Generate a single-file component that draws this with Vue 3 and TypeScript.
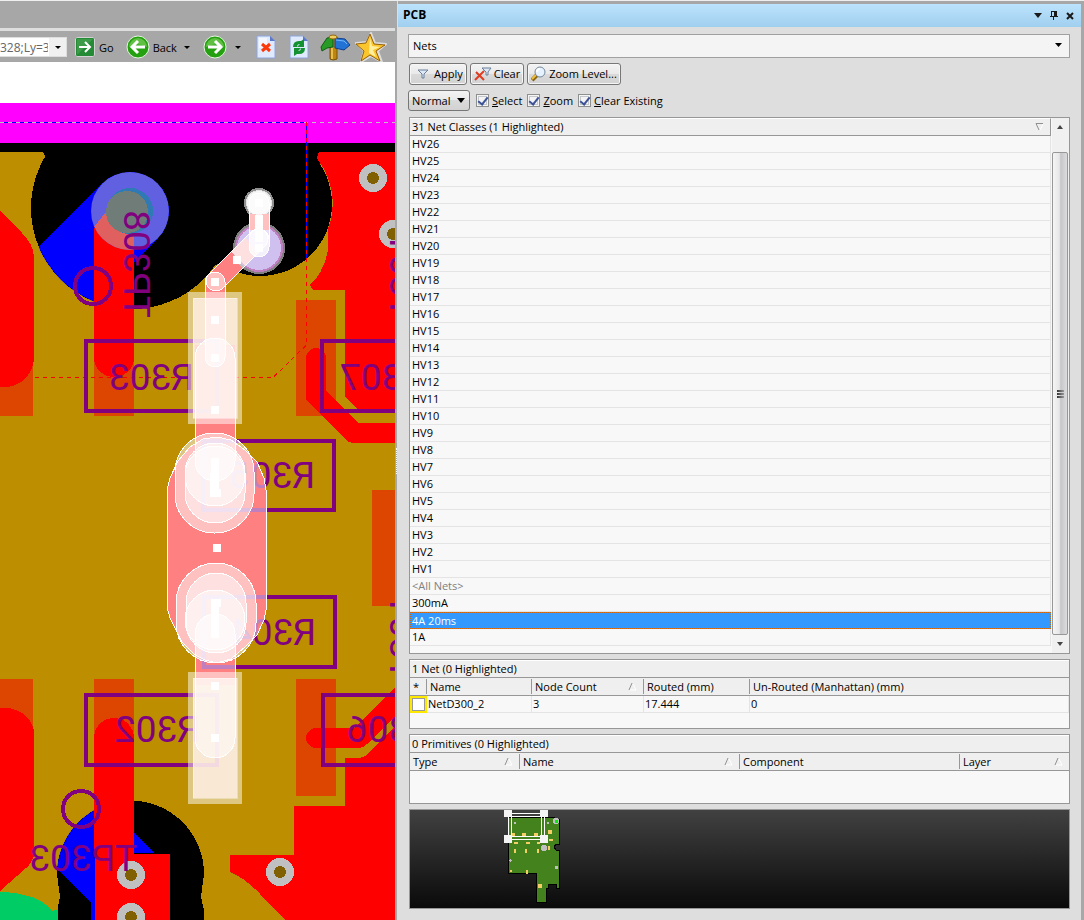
<script setup lang="ts">
import { computed, ref } from 'vue'

interface Via { x: number; y: number }
interface Box { x: number; y: number; w: number; h: number }
interface Column { label: string; sort: boolean; cls: string }

const hvClasses: string[] = Array.from({ length: 26 }, (_, i) => `HV${26 - i}`)
const netClasses = computed<string[]>(() => [...hvClasses, '<All Nets>', '300mA', '4A 20ms', '1A'])
const selected = ref('4A 20ms')

const address = ref('328;Ly=3950')
const objectKind = ref('Nets')
const maskMode = ref('Normal')
const optSelect = ref(true)
const optZoom = ref(true)
const optClear = ref(true)

const netColumns: Column[] = [
  { label: '*', sort: false, cls: 'c-mark' },
  { label: 'Name', sort: false, cls: 'c-name' },
  { label: 'Node Count', sort: true, cls: 'c-count' },
  { label: 'Routed (mm)', sort: false, cls: 'c-routed' },
  { label: 'Un-Routed (Manhattan) (mm)', sort: false, cls: 'c-rest' },
]
const primColumns: Column[] = [
  { label: 'Type', sort: true, cls: 'c-type' },
  { label: 'Name', sort: true, cls: 'c-wide' },
  { label: 'Component', sort: false, cls: 'c-wide' },
  { label: 'Layer', sort: true, cls: 'c-rest' },
]

const vias: Via[] = [
  { x: 373, y: 178 }, { x: 393, y: 234 }, { x: 280, y: 872 }, { x: 131, y: 875 }, { x: 131, y: 917 },
]
const pads: Box[] = [
  { x: 0, y: 300, w: 33, h: 116 }, { x: 94, y: 300, w: 40, h: 116 }, { x: 296, y: 300, w: 40, h: 116 },
  { x: 372, y: 490, w: 23, h: 116 }, { x: 0, y: 679, w: 33, h: 60 }, { x: 94, y: 679, w: 40, h: 60 },
  { x: 296, y: 679, w: 40, h: 117 },
]
const outlines: Box[] = [
  { x: 86, y: 341, w: 131, h: 70 }, { x: 322, y: 341, w: 131, h: 70 }, { x: 203, y: 441, w: 131, h: 69 },
  { x: 204, y: 597, w: 131, h: 70 }, { x: 86, y: 695, w: 131, h: 70 }, { x: 323, y: 695, w: 131, h: 70 },
]
const handles: Via[] = [
  { x: 259, y: 203 }, { x: 259, y: 238 }, { x: 259, y: 248 }, { x: 237, y: 260 }, { x: 215, y: 282 },
  { x: 215, y: 320 }, { x: 215, y: 358 }, { x: 215, y: 410 }, { x: 217, y: 548 }, { x: 215, y: 686 }, { x: 215, y: 738 },
]
const labels = [
  { t: 'R303', x: 194, y: 390 }, { t: 'R307', x: 425, y: 390 }, { t: 'R305', x: 315, y: 488 },
  { t: 'R304', x: 316, y: 645 }, { t: 'R302', x: 200, y: 742 }, { t: 'R306', x: 432, y: 742 },
  { t: 'TP303', x: 137, y: 871 },
]
const miniPads: Box[] = [
  { x: 32, y: 33, w: 3, h: 4 }, { x: 42, y: 33, w: 4, h: 4 }, { x: 54, y: 33, w: 4, h: 4 }, { x: 68, y: 30, w: 4, h: 4 },
  { x: 34, y: 42, w: 4, h: 2 }, { x: 46, y: 42, w: 4, h: 2 }, { x: 57, y: 42, w: 3, h: 2 }, { x: 69, y: 39, w: 4, h: 2 },
  { x: 34, y: 49, w: 2, h: 4 }, { x: 45, y: 49, w: 2, h: 4 }, { x: 57, y: 49, w: 2, h: 4 }, { x: 68, y: 46, w: 2, h: 4 },
  { x: 30, y: 70, w: 2, h: 2 }, { x: 46, y: 70, w: 2, h: 4 }, { x: 58, y: 84, w: 4, h: 4 },
]
const joint = 'M167 490L170 478 178 461 190 447 203 439 217 437 231 440 245 450 257 462 264 478 266 490V610L264 620 257 635 245 647 231 659 217 663 205 660 195 655 182 642 170 618 167 607z'
</script>

<template>
  <div class="app">
    <section class="editor">
      <div class="tabstrip"></div>
      <div class="toolbar">
        <div class="address">
          <input v-model="address" type="text" aria-label="Document address" />
          <button type="button" aria-label="Address history"><i class="caret"></i></button>
        </div>
        <button type="button" class="tool go">
          <svg width="20" height="20" viewBox="0 0 20 20">
            <rect x=".5" y=".5" width="19" height="19" rx="2" fill="#fff" />
            <rect x="1" y="1" width="18" height="18" rx="1" fill="#258a35" />
            <path d="M2 18V2h16z" fill="#4ba756" opacity=".6" />
            <path d="M4 10h10M10 5l5 5-5 5" fill="none" stroke="#fff" stroke-width="2" />
          </svg>
          <span>Go</span>
        </button>
        <button type="button" class="tool back">
          <svg width="24" height="24" viewBox="0 0 24 24">
            <circle cx="12" cy="12" r="11" fill="#24a010" stroke="#e4f5df" />
            <path d="M3 12a9 9 0 0 1 18 0q-9-5-18 0z" fill="#7fd161" opacity=".65" />
            <path d="M19 12H7M12 6l-6 6 6 6" fill="none" stroke="#fff" stroke-width="3" />
          </svg>
          <span>Back</span><i class="caret"></i>
        </button>
        <button type="button" class="tool forward" aria-label="Forward">
          <svg width="24" height="24" viewBox="0 0 24 24">
            <circle cx="12" cy="12" r="11" fill="#24a010" stroke="#e4f5df" />
            <path d="M3 12a9 9 0 0 1 18 0q-9-5-18 0z" fill="#7fd161" opacity=".65" />
            <path d="M5 12h12M12 6l6 6-6 6" fill="none" stroke="#fff" stroke-width="3" />
          </svg>
          <i class="caret"></i>
        </button>
        <button type="button" class="tool" aria-label="Stop">
          <svg width="20" height="24" viewBox="0 0 20 24">
            <path d="M1 1h13l5 5v17H1z" fill="#dfeafd" stroke="#8ea4dc" />
            <path d="M3 3h8v10H3z" fill="#fff" opacity=".6" />
            <path d="M14 1v5h5z" fill="#5c78c8" />
            <path d="M6 9l8 7M14 9l-8 7" stroke="#fa3a0a" stroke-width="3" />
          </svg>
        </button>
        <button type="button" class="tool refresh" aria-label="Refresh">
          <svg width="20" height="24" viewBox="0 0 20 24">
            <path d="M1 1h13l5 5v17H1z" fill="#dfeafd" stroke="#8ea4dc" />
            <path d="M14 1v5h5z" fill="#5c78c8" />
            <path d="M4 12q0-6 6-6h2l3-2v8H8l3-3q-3 0-3 3z" fill="#149232" />
            <path d="M16 13q0 6-6 6H8l-3 2v-8h7l-3 3q3 0 3-3z" fill="#149232" />
          </svg>
        </button>
        <button type="button" class="tool sign" aria-label="Home">
          <svg width="31" height="27" viewBox="0 0 31 27">
            <path d="M10 3h7v22q-4 2-7 0z" fill="#bd8512" stroke="#7c5205" />
            <path d="M12 3v22" stroke="#e9bf4b" stroke-width="2" />
            <path d="M1 13L7 4l6-1v10l-6 1-5 3z" fill="#279b25" stroke="#135d14" />
            <path d="M15 4l10 1 5 6-6 5-9-2z" fill="#2373d6" stroke="#123f8c" />
            <path d="M16 6l8 1 3 3" fill="none" stroke="#70b6ff" />
            <ellipse cx="13" cy="3" rx="4" ry="2" fill="#f0ce62" stroke="#946812" />
          </svg>
        </button>
        <button type="button" class="tool" aria-label="Favorites">
          <svg width="32" height="30" viewBox="0 0 32 30">
            <path d="M16 1l4 10 11 1-8 7 4 11-11-6-10 6 3-11-8-8 11-1z" fill="#dcdcdc" stroke="#dcdcdc" stroke-width="2" stroke-linejoin="round" />
            <path d="M15 2l4 10 11 1-9 6 4 10-10-6-9 6 3-10-8-7 10-1z" fill="#fbc62b" stroke="#95600a" stroke-linejoin="round" />
            <path d="M15 6l2 8 8 1-7 3 3 7-7-4z" fill="#fff0a0" />
          </svg>
        </button>
      </div>

      <svg class="board" viewBox="0 62 395 858" shape-rendering="crispEdges" role="img" aria-label="Board layout">
        <defs>
          <clipPath id="upperVoid"><circle cx="132" cy="208" r="101" /></clipPath>
          <clipPath id="lowerVoid"><path d="M57 874A73 73 0 0 1 204 874L201 897 204 910V920H57V912L60 897z" /></clipPath>
          <clipPath id="testPoint"><circle cx="130" cy="211" r="39" /></clipPath>
        </defs>
        <rect x="0" y="62" width="395" height="858" fill="#bc8e00" />
        <circle cx="132" cy="208" r="101" />
        <circle cx="260" cy="204" r="72" />
        <path d="M43 152l3 6 20 60 144 50 40-20 70-50V152z" />
        <path d="M57 874A73 73 0 0 1 204 874L201 897 204 910V920H57V912L60 897z" />
        <path d="M130 211L40 301" stroke="#00f" stroke-width="78" stroke-linecap="round" clip-path="url(#upperVoid)" />
        <path clip-path="url(#lowerVoid)" d="M50 790h84v43l20 20h-20v67H91v-18L57 869z" fill="#00f" />
        <path d="M0 892Q38 893 52 911L58 909V920H0z" fill="#0c6" />

        <rect v-for="(p, i) in pads" :key="'p' + i" :x="p.x" :y="p.y" :width="p.w" :height="p.h" fill="#dc4600" />

        <g fill="#f00">
          <path d="M0 211L22 233Q34 245 34 258V357A29 30 0 0 1 5 387H0z" />
          <path d="M0 708H5A29 26 0 0 1 34 734V855Q32 863 26 868L0 891z" />
          <path d="M94 228V358A20 19 0 0 0 134 358V211H115z" />
          <path d="M94 738A20 20 0 0 1 134 738V854H170V920H95V854H94z" />
          <path d="M395 152H319L317 157 318 160A72 72 0 0 1 328 229V250Q324 272 310 285L313 290H345V397L357 409H395z" />
          <path d="M306 358A10 10 0 0 1 326 358V391L358 423H395V443H354Q349 443 345 439L306 400z" />
          <path d="M316 728H354L395 687V716L367 744Q363 748 358 748H316A10 10 0 0 1 316 728z" />
          <path d="M395 726L370 752Q365 758 357 758H345V806H294V855H230V872Q245 878 260 894L285 920H395z" />
          <rect x="195" y="345" width="40" height="340" />
          <path :d="joint" />
          <path d="M215 286V358M215 282L259 238" stroke="#f00" stroke-width="20" stroke-linecap="round" />
        </g>

        <g clip-path="url(#testPoint)">
          <rect x="90" y="170" width="80" height="80" fill="#6060e0" />
          <path d="M90 232L118 197 150 220 134 232V252H90z" fill="#e06060" />
          <circle cx="130" cy="211" r="23" fill="#2f7ab4" />
          <circle cx="127" cy="212" r="21" fill="#707c78" />
        </g>

        <rect x="0" y="143" width="395" height="9" />
        <rect x="0" y="103" width="395" height="40" fill="#f0f" />
        <rect x="0" y="62" width="395" height="41" fill="#fff" />

        <path d="M0 122.5H395" stroke="#c0c0c0" stroke-dasharray="4 4" />
        <path d="M4 122.5H306" stroke="#00f" stroke-dasharray="4 4" />
        <path d="M306.500 122V260" stroke="#00f" />
        <path d="M306.500 122V345L273 377.500H32" fill="none" stroke="#f00" stroke-dasharray="4 4" />

        <g v-for="(v, i) in vias" :key="'v' + i">
          <circle :cx="v.x" :cy="v.y" r="14" fill="#c0c0c0" />
          <circle :cx="v.x" :cy="v.y" r="6" fill="#806000" />
        </g>

        <g fill="none" stroke="#800080" stroke-width="4">
          <rect v-for="(o, i) in outlines" :key="'o' + i" :x="o.x" :y="o.y" :width="o.w" :height="o.h" />
          <circle cx="93" cy="286" r="18" />
          <circle cx="81" cy="809" r="18" />
        </g>
        <g class="silk">
          <text v-for="l in labels" :key="l.t" :transform="`matrix(-1 0 0 1 ${l.x} ${l.y})`">{{ l.t }}</text>
          <text transform="matrix(0 -1 -1 0 124 318)">TP308</text>
          <text transform="matrix(0 -1 -1 0 390 318)">T301</text>
          <text transform="matrix(0 -1 -1 0 390 680)">T301</text>
        </g>

        <circle cx="259" cy="248" r="26" fill="#808080" />
        <circle cx="259" cy="248" r="24" fill="#c080c0" />
        <circle cx="259" cy="248" r="22" fill="#d0c0f0" />
        <circle cx="259" cy="203" r="15" fill="#909090" />
        <circle cx="259" cy="203" r="13" fill="#e4e4e4" />
        <path d="M238 259L252 245" stroke="#ffc0c0" stroke-width="20" />
        <rect x="249" y="214" width="20" height="16" fill="#ff8080" />

        <g fill="#fff" fill-opacity=".5">
          <rect x="188" y="292" width="54" height="132" />
          <rect x="188" y="672" width="54" height="132" />
        </g>
        <g fill="#fff0e8" fill-opacity=".8" stroke="#fff" stroke-opacity=".4">
          <rect x="193" y="298" width="44" height="120" />
          <rect x="193" y="678" width="44" height="120" />
        </g>
        <g fill="#fff" fill-opacity=".5" stroke="#fff">
          <rect x="195" y="338" width="40" height="143" rx="20" />
          <rect x="195" y="614" width="40" height="144" rx="20" />
          <path :d="joint" />
          <rect x="175" y="433" width="79" height="100" rx="39" />
          <rect x="185" y="443" width="60" height="80" rx="30" />
          <circle cx="215" cy="476" r="30" />
          <rect x="176" y="563" width="80" height="100" rx="40" />
          <rect x="186" y="573" width="60" height="80" rx="30" />
          <circle cx="215" cy="620" r="30" />
          <rect x="205" y="272" width="20" height="95" rx="10" />
          <path d="M208 275L252 231A10 10 0 0 1 266 245L222 289A10 10 0 0 1 208 275z" />
          <rect x="249" y="193" width="20" height="64" rx="10" />
          <rect x="249" y="229" width="20" height="28" rx="10" />
        </g>
        <circle cx="259" cy="203" r="12" fill="#fff" opacity=".7" />
        <g fill="#fff">
          <rect v-for="(h, i) in handles" :key="'h' + i" :x="h.x - 4" :y="h.y - 4" width="8" height="8" />
          <rect x="255" y="215" width="8" height="22" />
          <path d="M211 458h8v31h2v8h-11v-24h1z" />
          <path d="M211 599h10v8h-2v31h-8z" />
        </g>
      </svg>
    </section>

    <div class="splitter"><i class="grip"></i></div>

    <aside class="panel">
      <header class="title">
        <h1>PCB</h1>
        <button type="button" aria-label="Panel menu">
          <svg width="8" height="5" viewBox="0 0 8 5"><path d="M0 0h8L4 5z" fill="#1a1a1a" /></svg>
        </button>
        <button type="button" aria-label="Pin panel">
          <svg width="8" height="9" viewBox="0 0 8 9" shape-rendering="crispEdges"><path d="M1 0h6v5h1v1H4v3H3V6H0V5h1z" fill="#1a1a1a" /><path d="M2 1h2v4H2z" fill="#b4dcf7" /></svg>
        </button>
        <button type="button" aria-label="Close panel">
          <svg width="8" height="8" viewBox="0 0 8 8"><path d="M1 1l6 6M7 1L1 7" stroke="#1a1a1a" stroke-width="2" /></svg>
        </button>
      </header>

      <div class="body">
        <div class="kind">
          <select v-model="objectKind" aria-label="Object kind"><option>Nets</option></select>
          <svg width="7" height="4" viewBox="0 0 7 4"><path d="M0 0h7L3.500 4z" /></svg>
        </div>

        <div class="buttons">
          <button type="button">
            <svg class="funnel" width="12" height="10" viewBox="0 0 12 10"><path d="M1 1h10L7 5v4H5V5z" fill="#dce8f5" stroke="#6b7f99" /></svg>
            Apply
          </button>
          <button type="button">
            <svg width="18" height="16" viewBox="0 0 18 16">
              <path d="M8 2h9l-3 4v3h-2V6z" fill="#dce8f5" stroke="#6b7f99" />
              <path d="M2 6l8 8M10 5l-9 9" stroke="#e03c22" stroke-width="2" />
            </svg>
            Clear
          </button>
          <button type="button">
            <svg width="16" height="16" viewBox="0 0 16 16">
              <path d="M1 14l5-5" stroke="#8a6410" stroke-width="4" /><path d="M1 13l4-4" stroke="#f0c040" stroke-width="2" />
              <circle cx="9" cy="6" r="5" fill="#e6f2ff" stroke="#73879c" /><path d="M6 6q0-3 3-3" stroke="#fff" fill="none" stroke-width="2" />
            </svg>
            Zoom Level...
          </button>
        </div>

        <div class="options">
          <div class="mode">
            <select v-model="maskMode" aria-label="Mask mode"><option>Normal</option></select>
            <svg width="8" height="5" viewBox="0 0 8 5"><path d="M0 0h8L4 5z" /></svg>
          </div>
          <label><input v-model="optSelect" type="checkbox" /><span><u>S</u>elect</span></label>
          <label><input v-model="optZoom" type="checkbox" /><span><u>Z</u>oom</span></label>
          <label><input v-model="optClear" type="checkbox" /><span><u>C</u>lear Existing</span></label>
        </div>

        <div class="frame classes">
          <table>
            <thead>
              <tr><th scope="col"><div class="head">31 Net Classes (1 Highlighted)
                <svg width="9" height="8" viewBox="0 0 9 8"><path d="M8 1L5 7" stroke="#fff" /><path d="M8 .5H1L4 7" fill="none" stroke="#909090" /></svg>
              </div></th></tr>
            </thead>
            <tbody>
              <tr v-for="c in netClasses" :key="c" :class="{ on: c === selected, all: c === '<All Nets>' }" @click="selected = c">
                <td>{{ c }}</td>
              </tr>
            </tbody>
          </table>
          <div class="scroll">
            <button type="button" aria-label="Scroll up"><svg width="6" height="4" viewBox="0 0 6 4"><path d="M3 0l3 4H0z" fill="#444" /></svg></button>
            <div class="track"><div class="thumb"><i></i><i></i><i></i></div></div>
            <button type="button" aria-label="Scroll down"><svg width="6" height="4" viewBox="0 0 6 4"><path d="M0 0h6L3 4z" fill="#444" /></svg></button>
          </div>
        </div>

        <div class="frame nets">
          <table>
            <caption>1 Net (0 Highlighted)</caption>
            <thead>
              <tr>
                <th v-for="c in netColumns" :key="c.label" scope="col" :class="c.cls"><div class="head">{{ c.label }}
                  <svg v-if="c.sort" width="9" height="8" viewBox="0 0 9 8"><path d="M5 1l3 6H2" fill="none" stroke="#fff" /><path d="M1 7L4 0" stroke="#909090" /></svg>
                </div></th>
              </tr>
            </thead>
            <tbody>
              <tr><td class="mark"><input type="checkbox" aria-label="Highlight NetD300_2" /></td><td>NetD300_2</td><td>3</td><td>17.444</td><td>0</td></tr>
            </tbody>
          </table>
        </div>

        <div class="frame prims">
          <table>
            <caption>0 Primitives (0 Highlighted)</caption>
            <thead>
              <tr>
                <th v-for="(c, i) in primColumns" :key="i" scope="col" :class="c.cls"><div class="head">{{ c.label }}
                  <svg v-if="c.sort" width="9" height="8" viewBox="0 0 9 8"><path d="M5 1l3 6H2" fill="none" stroke="#fff" /><path d="M1 7L4 0" stroke="#909090" /></svg>
                </div></th>
              </tr>
            </thead>
          </table>
        </div>

        <div class="preview">
          <svg width="160" height="98" viewBox="0 10 160 98" shape-rendering="crispEdges" role="img" aria-label="Board overview">
            <path d="M28 17H74V19H79V44H76L74 47 76 50H79V88H76V84H68V88H66V102H56V73H28z" fill="#43821c" stroke="#000" />
            <rect v-for="(m, i) in miniPads" :key="'m' + i" :x="m.x" :y="m.y" :width="m.w" :height="m.h" fill="#f5ce66" />
            <g fill="#c0c0c0">
              <rect x="34" y="22" width="2" height="2" /><rect x="67" y="22" width="2" height="2" />
              <rect x="29" y="60" width="3" height="1" /><rect x="30" y="59" width="1" height="3" />
              <rect x="75" y="66" width="3" height="3" /><circle cx="64" cy="48" r="3" />
              <circle cx="76" cy="21" r="3" />
            </g>
            <rect x="75" y="20" width="3" height="3" fill="#0e0" />
            <rect x="28.500" y="13.500" width="36" height="26" fill="none" stroke="#fff" />
            <rect x="31.500" y="16.500" width="30" height="20" fill="none" stroke="#fff" />
            <g fill="#f4f4f4">
              <rect x="24" y="10" width="8" height="7" /><rect x="60" y="10" width="8" height="7" />
              <rect x="24" y="35" width="8" height="8" /><rect x="60" y="35" width="8" height="8" />
            </g>
          </svg>
        </div>
      </div>
    </aside>
  </div>
</template>

<style>
body { margin: 0; background: #a7a7a7; }
</style>

<style scoped>
* { box-sizing: border-box; }
.app {
  display: grid;
  grid-template-columns: minmax(0, 395fr) 3px minmax(0, 683fr);
  min-height: 100vh;
  border-top: 1px solid #eee;
  padding-right: 3px;
  background: #a7a7a7;
  color: #000;
  font: 11px/17px "Open Sans", "Noto Sans", sans-serif;
}
button, input, select { font: inherit; color: inherit; margin: 0; }
button { cursor: pointer; }
svg { display: block; flex: none; }

.editor { min-width: 0; overflow: hidden; background: #bc8e00; }
.tabstrip { height: 30px; background: #a7a7a7; border-bottom: 3px solid #dedede; }
.toolbar { display: flex; align-items: center; height: 31px; padding-top: 1px; background: #a7a7a7; overflow: hidden; }
.address { display: flex; width: 67px; height: 20px; background: #fff; border: 1px solid #ddd; border-left: 0; margin-right: 8px; flex: none; }
.address input { flex: 1; min-width: 0; border: 0; padding: 0; background: none; color: #666; outline: none; font-size: 12px; }
.address button { width: 17px; border: 0; padding: 0; margin-left: 1px; background: #f0f0f0; display: grid; place-items: center; }
.caret { width: 0; height: 0; border: 3px solid transparent; border-top-color: #000; border-bottom: 0; }
.tool { display: flex; align-items: center; border: 0; padding: 0; background: none; flex: none; }
.go { gap: 4px; margin-right: 12px; }
.back { gap: 3px; margin-right: 13px; }
.back .caret { margin-left: 4px; }
.forward { gap: 8px; margin-right: 15px; }
.refresh { margin: 0 11px 0 13px; }
.sign { margin-right: 4px; }
.board { width: 100%; height: auto; }
.silk text { font: 400 37px Roboto, sans-serif; fill: #800080; }

.splitter { display: flex; align-items: center; justify-content: flex-end; background: linear-gradient(90deg, #a7a7a7 2px, #dedede 2px); }
.grip { width: 1px; height: 26px; margin-right: 1px; border-left: 1px dotted #fff; }

.panel { min-width: 0; background: #dedede; border-top: 3px solid #a7a7a7; }
.title { display: flex; align-items: center; gap: 8px; height: 23px; padding: 0 7px 0 5px; background: linear-gradient(#bce3fd, #a0cfee); }
.title h1 { flex: 1; margin: 0; padding-bottom: 2px; font: 700 12px/20px "Open Sans", sans-serif; }
.title button { border: 0; padding: 0; background: none; }
.body { padding: 7px 11px 11px 10px; }
.kind { position: relative; height: 24px; }
.kind select, .mode select { appearance: none; width: 100%; height: 100%; border: 1px solid #a0a0a0; background: #f4f4f4; padding: 0 4px 2px; border-radius: 0; }
.kind svg { position: absolute; right: 8px; top: 9px; pointer-events: none; }
.buttons { display: flex; gap: 3px; margin-top: 5px; padding-left: 1px; }
.buttons button { display: flex; align-items: center; gap: 2px; height: 22px; padding: 0 3px 1px; border: 1px solid #777; border-radius: 3px; background: linear-gradient(#f3f3f3, #e9e9e9 50%, #dadada 50%, #d2d2d2); box-shadow: inset 0 0 0 1px #f6f6f6; }
.funnel { margin: 0 3px 0 4px; }
.options { display: flex; align-items: center; gap: 5px; height: 21px; margin-top: 5px; }
.mode { position: relative; width: 62px; height: 21px; margin-right: 1px; }
.mode select { padding: 0 3px; border-color: #777; border-radius: 3px; background: linear-gradient(#f3f3f3, #e9e9e9 50%, #dadada 50%, #d2d2d2); }
.mode svg { position: absolute; right: 5px; top: 8px; pointer-events: none; }
.options label { display: flex; align-items: center; gap: 3px; }
.options input { appearance: none; width: 13px; height: 13px; border: 1px solid #8e8f8f; background: #f4f4f4; box-shadow: inset 0 0 0 1px #f4f4f4, inset 0 0 0 2px #c4c8cc; display: grid; place-items: center; }
.options input:checked::after { content: ""; width: 4px; height: 8px; margin-top: -2px; border: solid #3c5296; border-width: 0 2px 2px 0; rotate: 38deg; }

.frame { margin-left: 1px; border: 1px solid #979797; background: #f8f8f8; }
table { width: 100%; border-collapse: separate; border-spacing: 0; table-layout: fixed; }
caption { height: 18px; padding-left: 2px; text-align: left; background: #efefef; border-top: 1px solid #fff; border-bottom: 1px solid #979797; line-height: 16px; }
th { height: 18px; padding: 0; font-weight: 400; text-align: left; background: #efefef; border-bottom: 1px solid #979797; }
td { height: 17px; padding: 0 2px; line-height: 16px; border-bottom: 1px solid #e4e4e4; border-right: 1px solid #e4e4e4; white-space: nowrap; }
.head { display: flex; align-items: center; justify-content: space-between; height: 15px; padding: 0 6px 0 3px; border-right: 1px solid #979797; white-space: nowrap; }
th:last-child .head { border-right: 0; }

.classes { display: flex; height: 537px; margin-top: 6px; }
.classes table { flex: 1; width: auto; align-self: flex-start; }
.classes th { border-right: 1px solid #979797; border-top: 1px solid #fff; vertical-align: top; }
.classes .head { padding: 0 6px 0 2px; }
.classes .all td { color: #808080; }
.classes .on td { padding: 0 1px; line-height: 15px; background: #3399ff; color: #fff; border: 1px dotted #d06810; }
.scroll { display: flex; flex-direction: column; width: 17px; padding-right: 1px; margin-left: 1px; background: #f0f0f0; }
.scroll button { height: 18px; border: 0; padding: 0; background: none; display: grid; place-items: center; }
.track { flex: 1; display: flex; padding-top: 16px; }
.thumb { flex: 1; display: flex; flex-direction: column; align-items: center; justify-content: center; gap: 1px; border: 1px solid #979797; border-radius: 2px; background: linear-gradient(90deg, #f5f5f5, #e6e6e8 45%, #c6c6ca 55%, #dcdcde); }
.thumb i { width: 7px; height: 2px; background: linear-gradient(90deg, #333, #999); }

.nets { height: 70px; margin-top: 5px; }
.nets .c-mark { width: 17px; }
.nets .c-name { width: 105px; }
.nets .c-count { width: 112px; }
.nets .c-routed { width: 106px; }
.nets td { padding: 0 1px; }
.nets .mark { padding: 0; background: #ffe800; border: 0; line-height: 0; }
.mark input { appearance: none; display: block; width: 13px; height: 13px; margin: 0 auto; border: 1px solid #999; background: #fff; }
.prims { height: 70px; margin-top: 5px; }
.prims .c-type { width: 110px; }
.prims .c-wide { width: 220px; }
.preview { height: 100px; margin: 5px 0 0 1px; padding-left: 70px; border: 1px solid #979797; background: linear-gradient(#414141, #0a0a0a); overflow: hidden; }
</style>
